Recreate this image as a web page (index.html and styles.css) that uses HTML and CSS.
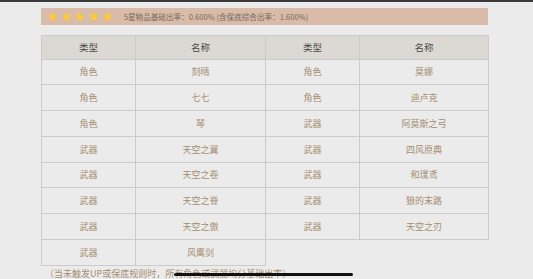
FILE: index.html
```html
<!DOCTYPE html>
<html lang="zh">
<head>
<meta charset="utf-8">
<link rel="stylesheet" href="styles.css">
</head>
<body>
<div class="topbar"></div>
<main class="content">
  <div class="banner">
    <div class="stars">
      <svg class="star" viewBox="0 0 24 24"><path d="M12 1.5l3.2 7 7.6.8-5.7 5.1 1.6 7.5L12 18l-6.7 3.9 1.6-7.5L1.2 9.3l7.6-.8z"/></svg>
      <svg class="star" viewBox="0 0 24 24"><path d="M12 1.5l3.2 7 7.6.8-5.7 5.1 1.6 7.5L12 18l-6.7 3.9 1.6-7.5L1.2 9.3l7.6-.8z"/></svg>
      <svg class="star" viewBox="0 0 24 24"><path d="M12 1.5l3.2 7 7.6.8-5.7 5.1 1.6 7.5L12 18l-6.7 3.9 1.6-7.5L1.2 9.3l7.6-.8z"/></svg>
      <svg class="star" viewBox="0 0 24 24"><path d="M12 1.5l3.2 7 7.6.8-5.7 5.1 1.6 7.5L12 18l-6.7 3.9 1.6-7.5L1.2 9.3l7.6-.8z"/></svg>
      <svg class="star" viewBox="0 0 24 24"><path d="M12 1.5l3.2 7 7.6.8-5.7 5.1 1.6 7.5L12 18l-6.7 3.9 1.6-7.5L1.2 9.3l7.6-.8z"/></svg>
    </div>
    <span class="rate">5星物品基础出率：0.600% (含保底综合出率：1.600%)</span>
  </div>
  <table class="pool">
    <colgroup>
      <col class="c-type"><col class="c-name"><col class="c-type"><col class="c-name2">
    </colgroup>
    <thead>
      <tr><th>类型</th><th>名称</th><th>类型</th><th>名称</th></tr>
    </thead>
    <tbody>
      <tr><td>角色</td><td>刻晴</td><td>角色</td><td>莫娜</td></tr>
      <tr><td>角色</td><td>七七</td><td>角色</td><td>迪卢克</td></tr>
      <tr><td>角色</td><td>琴</td><td>武器</td><td>阿莫斯之弓</td></tr>
      <tr><td>武器</td><td>天空之翼</td><td>武器</td><td>四风原典</td></tr>
      <tr><td>武器</td><td>天空之卷</td><td>武器</td><td>和璞鸢</td></tr>
      <tr><td>武器</td><td>天空之脊</td><td>武器</td><td>狼的末路</td></tr>
      <tr><td>武器</td><td>天空之傲</td><td>武器</td><td>天空之刃</td></tr>
      <tr><td>武器</td><td>风鹰剑</td></tr>
    </tbody>
  </table>
  <p class="note">（当未触发UP或保底规则时，所有角色或武器均分基础出率）</p>
</main>
<div class="home-indicator"></div>
</body>
</html>
```

FILE: styles.css
```css
html, body {
  margin: 0;
  padding: 0;
  background: #ebebeb;
  height: 279px;
  overflow: hidden;
  font-family: "Noto Sans CJK SC", "Noto Sans", sans-serif;
}

.topbar {
  height: 1.5px;
  background: #3a3a3a;
}

.content {
  margin-left: 41px;
  width: 447px;
  padding-top: 6px;
}

.banner {
  height: 17px;
  background: #d8bba8;
  display: flex;
  align-items: center;
  padding-left: 6px;
  box-sizing: border-box;
}

.stars {
  display: flex;
  gap: 2.7px;
}

.star {
  width: 11px;
  height: 11px;
  fill: #fbcb3c;
}

.rate {
  margin-left: 11px;
  font-size: 7.6px;
  color: #756a61;
  white-space: nowrap;
}

.pool {
  margin-top: 10px;
  width: 447px;
  border-collapse: collapse;
  table-layout: fixed;
  font-size: 9px;
}

.c-type { width: 94px; }
.c-name { width: 130px; }
.c-name2 { width: 129px; }

.pool th,
.pool td {
  border: 1px solid #cbcbcb;
  padding: 0;
  text-align: center;
  font-weight: normal;
}

.pool th {
  height: 23px;
  background: #dcd8d4;
  color: #4e4a46;
  font-size: 9.5px;
}

.pool td {
  height: 24.75px;
  color: #a48e72;
}

.note {
  margin: 0;
  padding-left: 4px;
  font-size: 9px;
  line-height: 16px;
  color: #a48e72;
  white-space: nowrap;
}

.home-indicator {
  position: absolute;
  left: 174px;
  top: 272.5px;
  width: 179px;
  height: 3.5px;
  border-radius: 2px;
  background: #111;
}
```
